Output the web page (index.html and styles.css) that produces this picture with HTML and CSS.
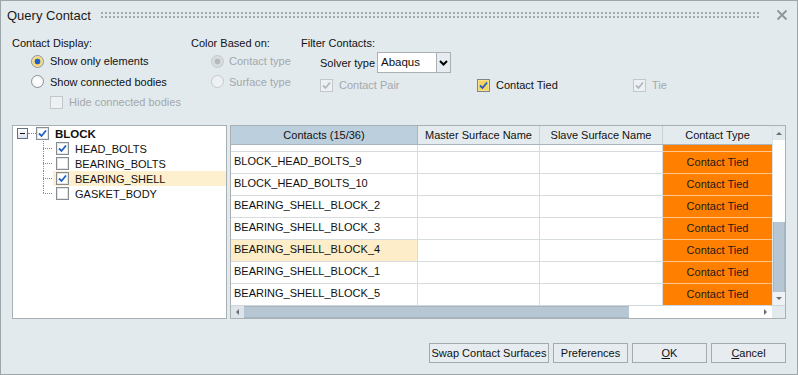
FILE: index.html
```html
<!DOCTYPE html>
<html>
<head>
<meta charset="utf-8">
<link rel="stylesheet" href="styles.css">
</head>
<body>
<div class="dialog">
  <div class="titlebar">
    <span class="title">Query Contact</span>
    <span class="dots"></span>
    <svg class="close" width="12" height="12" viewBox="0 0 12 12"><path d="M1.5 1.5 L10.5 10.5 M10.5 1.5 L1.5 10.5" stroke="#8c959a" stroke-width="1.8" fill="none"/></svg>
  </div>

  <div class="options">
    <div class="group g1">
      <div class="glabel">Contact Display:</div>
      <div class="opt ind h20"><span class="radio on"></span>Show only elements</div>
      <div class="opt ind h21"><span class="radio"></span>Show connected bodies</div>
      <div class="opt ind2 h20 disabled"><span class="cb dis"></span>Hide connected bodies</div>
    </div>
    <div class="group g2">
      <div class="glabel">Color Based on:</div>
      <div class="opt ind h20 disabled"><span class="radio on dis"></span>Contact type</div>
      <div class="opt ind h21 disabled"><span class="radio dis"></span>Surface type</div>
    </div>
    <div class="group g3">
      <div class="glabel">Filter Contacts:</div>
      <div class="solver ind">
        <span class="solver-label">Solver type</span>
        <div class="select">
          <span class="sel-val">Abaqus</span>
          <span class="sel-btn"><svg width="9" height="6" viewBox="0 0 9 6"><path d="M1 1 L4.5 4.5 L8 1" stroke="#000" stroke-width="2" fill="none"/></svg></span>
        </div>
      </div>
      <div class="filters ind">
        <div class="opt fcol disabled"><span class="cb dis"><svg class="chk" viewBox="0 0 11 11"><path d="M2 5.5 L4.5 8 L9 2.5" stroke="#b3b8bb" stroke-width="1.8" fill="none"/></svg></span>Contact Pair</div>
        <div class="opt fcol"><span class="cb yellow"><svg class="chk" viewBox="0 0 11 11"><path d="M2 5.5 L4.5 8 L9 2.5" stroke="#1d5fc2" stroke-width="1.8" fill="none"/></svg></span>Contact Tied</div>
        <div class="opt disabled"><span class="cb dis"><svg class="chk" viewBox="0 0 11 11"><path d="M2 5.5 L4.5 8 L9 2.5" stroke="#b3b8bb" stroke-width="1.8" fill="none"/></svg></span>Tie</div>
      </div>
    </div>
  </div>

  <div class="main">
    <div class="tree">
      <div class="troot">
        <span class="expander"><span class="minus"></span></span>
        <span class="hconn"></span>
        <span class="cb tcb"><svg class="chk" viewBox="0 0 11 11"><path d="M2 5.5 L4.5 8 L9 2.5" stroke="#1d5fc2" stroke-width="1.8" fill="none"/></svg></span>
        <span class="tlabel bold">BLOCK</span>
      </div>
      <div class="tchild">
        <span class="conn"><span class="up"></span><span class="down"></span></span>
        <span class="titem"><span class="cb tcb"><svg class="chk" viewBox="0 0 11 11"><path d="M2 5.5 L4.5 8 L9 2.5" stroke="#1d5fc2" stroke-width="1.8" fill="none"/></svg></span><span class="tlabel">HEAD_BOLTS</span></span>
      </div>
      <div class="tchild">
        <span class="conn"><span class="up"></span><span class="down"></span></span>
        <span class="titem"><span class="cb tcb"></span><span class="tlabel">BEARING_BOLTS</span></span>
      </div>
      <div class="tchild">
        <span class="conn"><span class="up"></span><span class="down"></span></span>
        <span class="titem sel"><span class="cb tcb"><svg class="chk" viewBox="0 0 11 11"><path d="M2 5.5 L4.5 8 L9 2.5" stroke="#1d5fc2" stroke-width="1.8" fill="none"/></svg></span><span class="tlabel">BEARING_SHELL</span></span>
      </div>
      <div class="tchild">
        <span class="conn last"><span class="up"></span><span class="down"></span></span>
        <span class="titem"><span class="cb tcb"></span><span class="tlabel">GASKET_BODY</span></span>
      </div>
    </div>

    <div class="table">
      <div class="tmain">
        <div class="grid">
          <div class="thead">
            <div class="th c1 sorted">Contacts (15/36)</div>
            <div class="th c2">Master Surface Name</div>
            <div class="th c3">Slave Surface Name</div>
            <div class="th c4">Contact Type</div>
          </div>
          <div class="tbody">
            <div class="tr partial"><div class="td c1"></div><div class="td c2"></div><div class="td c3"></div><div class="td c4 orange"></div></div>
            <div class="tr"><div class="td c1">BLOCK_HEAD_BOLTS_9</div><div class="td c2"></div><div class="td c3"></div><div class="td c4 orange">Contact Tied</div></div>
            <div class="tr"><div class="td c1">BLOCK_HEAD_BOLTS_10</div><div class="td c2"></div><div class="td c3"></div><div class="td c4 orange">Contact Tied</div></div>
            <div class="tr"><div class="td c1">BEARING_SHELL_BLOCK_2</div><div class="td c2"></div><div class="td c3"></div><div class="td c4 orange">Contact Tied</div></div>
            <div class="tr"><div class="td c1">BEARING_SHELL_BLOCK_3</div><div class="td c2"></div><div class="td c3"></div><div class="td c4 orange">Contact Tied</div></div>
            <div class="tr"><div class="td c1 hl">BEARING_SHELL_BLOCK_4</div><div class="td c2"></div><div class="td c3"></div><div class="td c4 orange">Contact Tied</div></div>
            <div class="tr"><div class="td c1">BEARING_SHELL_BLOCK_1</div><div class="td c2"></div><div class="td c3"></div><div class="td c4 orange">Contact Tied</div></div>
            <div class="tr"><div class="td c1">BEARING_SHELL_BLOCK_5</div><div class="td c2"></div><div class="td c3"></div><div class="td c4 orange">Contact Tied</div></div>
          </div>
        </div>
        <div class="vscroll">
          <div class="sbtn"><span class="arr up"></span></div>
          <div class="vtrack"></div>
          <div class="vthumb"></div>
          <div class="sbtn white"><span class="arr down"></span></div>
        </div>
      </div>
      <div class="hscroll">
        <div class="sbtn hb"><span class="arr left"></span></div>
        <div class="hthumb"></div>
        <div class="htrack"></div>
        <div class="sbtn hb white"><span class="arr right"></span></div>
        <div class="corner"></div>
      </div>
    </div>
  </div>

  <div class="buttons">
    <button class="btn wide">Swap Contact Surfaces</button>
    <button class="btn">Preferences</button>
    <button class="btn"><u>O</u>K</button>
    <button class="btn"><u>C</u>ancel</button>
  </div>
</div>
</body>
</html>
```

FILE: styles.css
```css
* { box-sizing: border-box; }
html, body { margin: 0; padding: 0; }
body {
  font-family: "Liberation Sans", Arial, sans-serif;
  font-size: 11px;
  color: #111;
  background: #e3eaee;
}
.dialog {
  width: 798px;
  height: 375px;
  border: 1px solid #9ea6aa;
  background: #e3eaee;
  display: flex;
  flex-direction: column;
}

/* title bar */
.titlebar {
  height: 28px;
  display: flex;
  align-items: center;
  padding-left: 6px;
  padding-right: 9px;
}
.title { font-size: 13px; color: #1a1a1a; }
.dots {
  flex: 1;
  height: 6px;
  margin: 0 16px 0 10px;
  background-image: linear-gradient(to right, #a2aaae 2px, transparent 2px), linear-gradient(to right, #a2aaae 2px, transparent 2px);
  background-size: 4px 2px, 4px 2px;
  background-position: 0 0, 0 4px;
  background-repeat: repeat-x;
}
.close { display: block; }

/* options */
.options {
  display: grid;
  grid-template-columns: 179px 110px 1fr;
  padding: 6px 0 0 11px;
}
.glabel { height: 16px; line-height: 16px; }
.opt { display: flex; align-items: center; gap: 6px; white-space: nowrap; }
.h20 { height: 20px; }
.h21 { height: 21px; }
.ind { padding-left: 19px; }
.ind2 { padding-left: 38px; }
.g2 .ind { padding-left: 20px; }
.g2 .opt { gap: 5px; }
.disabled { color: #a3a8ab; }

.radio {
  width: 13px; height: 13px;
  border-radius: 50%;
  border: 1px solid #8c9296;
  background: radial-gradient(circle, #ffffff 0, #f1f3f4 100%);
  display: inline-block;
  flex: none;
}
.radio.on {
  background: radial-gradient(circle, #1d60c8 0 2.6px, #f7d872 3.2px 4.6px, #f3e6b8 5.2px);
}
.radio.dis { border-color: #c3c8cb; background: #eef1f3; }
.radio.on.dis {
  background: radial-gradient(circle, #b5b9bc 0 2.6px, #d8dcdf 3.2px);
}

.cb {
  width: 13px; height: 13px;
  border: 1px solid #878c90;
  background: #fff;
  box-shadow: inset 0 0 0 1px #e2e5e7;
  display: inline-flex;
  align-items: center;
  justify-content: center;
  flex: none;
}
.cb.dis { border-color: #c2c7ca; background: #eef1f3; box-shadow: none; }
.cb.yellow { background: #f6d35f; box-shadow: inset 0 0 0 1px #f9e08a; border-color: #7f8488; }
.chk { width: 11px; height: 11px; display: block; }

.solver {
  display: flex;
  align-items: center;
  height: 21px;
  margin-top: 1px;
}
.solver-label { width: 57px; white-space: nowrap; }
.select { display: flex; height: 21px; }
.sel-val {
  width: 60px;
  height: 21px;
  border: 1px solid #a9b0b4;
  background: #fff;
  line-height: 19px;
  padding-left: 3px;
  font-size: 11.5px;
}
.sel-btn {
  width: 14px;
  height: 21px;
  border: 1px solid #a9b0b4;
  border-left: none;
  background: #e6ecef;
  display: flex;
  align-items: center;
  justify-content: center;
}
.filters { display: flex; height: 24px; align-items: center; }
.fcol { width: 157px; }
.fcol + .fcol { width: 156px; }

/* main area */
.main {
  display: flex;
  gap: 3px;
  padding: 0 11px 0 11px;
  margin-top: 13px;
  align-items: flex-start;
}
.tree {
  width: 216px;
  height: 194px;
  background: #fff;
  border: 1px solid #a9b0b4;
}
.troot {
  height: 15px;
  display: flex;
  align-items: center;
}
.expander {
  width: 11px; height: 11px;
  margin-left: 4px;
  border: 1px solid #5f6f80;
  background: linear-gradient(#ffffff, #dbe2ea);
  display: flex;
  align-items: center;
  justify-content: center;
}
.minus { width: 5px; height: 1px; background: #111; }
.hconn {
  width: 8px;
  height: 1px;
  border-top: 1px dotted #8a8a8a;
}
.tlabel { margin-left: 6px; font-size: 11px; white-space: nowrap; }
.bold { font-weight: bold; font-size: 11.5px; }
.tchild {
  height: 15px;
  display: flex;
  padding-left: 30px;
}
.conn {
  width: 10px;
  display: flex;
  flex-direction: column;
}
.conn .up { height: 7px; border-left: 1px dotted #8a8a8a; }
.conn .down { flex: 1; border-left: 1px dotted #8a8a8a; border-top: 1px dotted #8a8a8a; margin-right: 1px; }
.conn.last .down { border-left-color: transparent; }
.titem {
  flex: 1;
  display: flex;
  align-items: center;
  padding-left: 3px;
}
.titem.sel { background: #fdf0cf; }

/* table */
.table {
  width: 556px;
  height: 194px;
  border: 1px solid #a9b0b4;
  background: #fff;
  display: flex;
  flex-direction: column;
}
.tmain { display: flex; height: 179px; }
.grid { width: 541px; display: flex; flex-direction: column; }
.thead { display: flex; height: 19px; border-bottom: 1px solid #aab4bb; background: #e4ebef; }
.th {
  text-align: center;
  line-height: 18px;
  border-right: 1px solid #c9d1d6;
  white-space: nowrap;
  overflow: hidden;
}
.th.sorted { background: #bccfdc; border-right-color: #a8b6c0; }
.c1 { width: 187px; }
.c2 { width: 122px; }
.c3 { width: 123px; }
.c4 { width: 109px; }
.th.c4 { border-right: none; }
.tbody { height: 160px; overflow: hidden; }
.tr { display: flex; height: 22px; }
.tr.partial { height: 7px; }
.td {
  border-right: 1px solid #d7dcdf;
  border-bottom: 1px solid #d7dcdf;
  white-space: nowrap;
  overflow: hidden;
}
.td.c1 { padding: 2px 0 0 3px; line-height: 14px; font-size: 11px; }
.td.hl { background: #fdedc8; }
.td.c4 { border-right: none; }
.orange {
  background: #ff8000;
  border-bottom-color: #ffc78a;
  text-align: center;
  line-height: 21px;
  color: #1a1a1a;
}

.vscroll {
  width: 13px;
  display: flex;
  flex-direction: column;
  border-left: 1px solid #dde3e7;
}
.sbtn {
  height: 14px;
  background: #e3eaee;
  display: flex;
  align-items: center;
  justify-content: center;
  flex: none;
}
.sbtn.white { background: #eef2f4; height: 13px; }
.vtrack { height: 82px; background: #fff; }
.vthumb { flex: 1; background: #b6c7d3; border-left: 1px solid #a6b7c3; border-right: 1px solid #a6b7c3; }

.arr { width: 0; height: 0; display: block; }
.arr.up { border-left: 3px solid transparent; border-right: 3px solid transparent; border-bottom: 3px solid #6b6f72; }
.arr.down { border-left: 3px solid transparent; border-right: 3px solid transparent; border-top: 3px solid #6b6f72; }
.arr.left { border-top: 3px solid transparent; border-bottom: 3px solid transparent; border-right: 3px solid #6b6f72; }
.arr.right { border-top: 3px solid transparent; border-bottom: 3px solid transparent; border-left: 3px solid #6b6f72; }

.hscroll {
  display: flex;
  height: 13px;
  border-top: 1px solid #cfd7dc;
}
.sbtn.hb { width: 13px; height: 12px; background: #dde5ea; }
.sbtn.hb.white { background: #fff; }
.hthumb { width: 385px; background: #b6c7d3; border-top: 1px solid #a6b7c3; border-bottom: 1px solid #a6b7c3; }
.htrack { flex: 1; background: #fff; }
.corner { width: 13px; background: #e3eaee; }

/* buttons */
.buttons {
  display: flex;
  justify-content: flex-end;
  gap: 4px;
  padding-right: 11px;
  margin-top: 24px;
}
.btn {
  width: 75px;
  height: 20px;
  border: 1px solid #a4abaf;
  background: #e6ecf0;
  font-family: "Liberation Sans", Arial, sans-serif;
  font-size: 11px;
  color: #111;
  padding: 0;
  white-space: nowrap;
}
.btn.wide { width: 120px; }
```
